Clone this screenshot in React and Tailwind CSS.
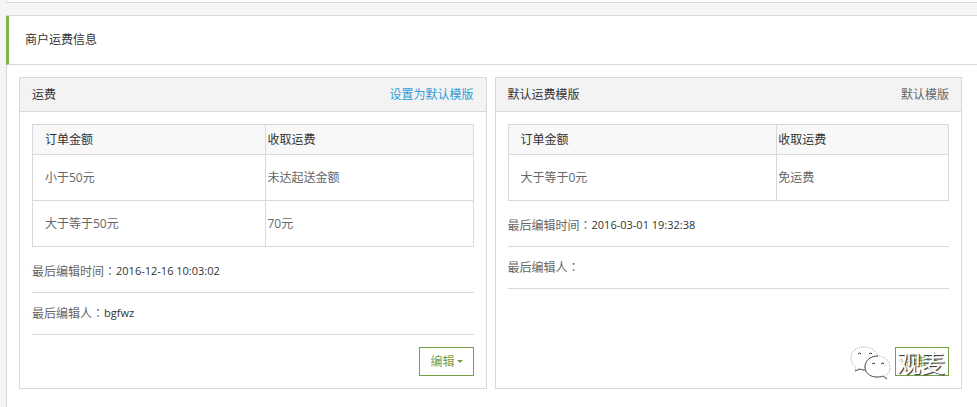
import React from 'react';

const Label = ({ children }) => (
    <dt>
        {children}
        <span className="font-['Noto_Sans_CJK_TC',sans-serif]">：</span>
    </dt>
);

const FreightCard = ({ title, action, columnClass, rows, editedAt, editedBy, children }) => {
    return (
        <section className="flex flex-col border border-[#d8d9db] bg-white">
            <header className="flex items-center justify-between h-[34px] px-3 bg-[#f3f3f3] border-b border-[#d8d9db]">
                <h2 className="text-[#333]">{title}</h2>
                {action}
            </header>

            <div className="flex flex-col flex-1 p-3">
                <table className="w-full border-collapse text-left">
                    <thead>
                        <tr className="h-[30px] bg-[#f8f8f9] text-[#333]">
                            <th className={`${columnClass} border border-[#d8d9db] pl-3 font-normal`}>订单金额</th>
                            <th className="border border-[#d8d9db] pl-px font-normal">收取运费</th>
                        </tr>
                    </thead>
                    <tbody>
                        {rows.map(([amount, fee]) => (
                            <tr key={amount} className="h-[46px]">
                                <td className="border border-[#d8d9db] pl-3">{amount}</td>
                                <td className="border border-[#d8d9db] pl-px">{fee}</td>
                            </tr>
                        ))}
                    </tbody>
                </table>

                <dl className="mt-1">
                    <div className="flex items-center h-[42px] border-b border-[#d8d9db]">
                        <Label>最后编辑时间</Label>
                        <dd className="text-[11px] text-[#333]">{editedAt}</dd>
                    </div>
                    <div className="flex items-center h-[42px] border-b border-[#d8d9db]">
                        <Label>最后编辑人</Label>
                        <dd className="text-[11px] text-[#333]">{editedBy}</dd>
                    </div>
                </dl>

                <div className="relative flex justify-end mt-auto pt-3">
                    <button type="button" className="flex items-center gap-0.5 h-[29px] px-2.5 border border-[#76a043] text-[#76a043]">
                        编辑
                        <svg width="6" height="3" viewBox="0 0 6 3" fill="currentColor" aria-hidden="true">
                            <path d="M0 0h6L3 3z" />
                        </svg>
                    </button>
                    {children}
                </div>
            </div>
        </section>
    );
};

const WechatMark = () => (
    <div className="absolute right-1 -bottom-1 flex items-center gap-1.5 pointer-events-none">
        <svg width="41" height="34" viewBox="0 0 41 34" fill="#fff" aria-hidden="true">
            <path d="M14 1C6 1 1 6 1 12c0 4 2 7 5 9l-1 4 5-2c2 1 9 1 11 0 4-2 7-6 7-11 0-6-6-11-14-11z" stroke="#999" strokeWidth="0.8" strokeDasharray="1 1" />
            <path d="M5 25l5-2c2 1 4 1 6 1" fill="none" stroke="#555" />
            <path d="M27 10c-7 0-12 5-12 11s5 10 12 10c2 0 4 0 6-1l4 3-1-4c3-2 4-4 4-8 0-6-6-11-13-11z" stroke="#999" strokeWidth="0.8" strokeDasharray="1 1" />
            <path d="M28 10c-7 0-13 4-13 11 0 6 5 10 12 10 2 0 4 0 6-1l4 3" fill="none" stroke="#555" />
            <path d="M8 8q2-2 3 0M19 8q2-2 3 0M22 18q2-2 3 0M31 18q2-2 3 0" fill="none" stroke="#333" />
        </svg>
        <span className="text-2xl leading-8 text-white [text-shadow:1px_1px_1px_#222]">观麦</span>
    </div>
);

const App = () => {
    return (
        <div className="min-h-screen flex flex-col pl-1.5 bg-[#f5f5f5] font-['Open_Sans','Noto_Sans_CJK_SC',sans-serif] text-xs text-[#666]">
            <div className="h-[3px] bg-white border-l border-b border-[#d8d9db]" />

            <main className="flex-1 mt-3 bg-white border-t border-[#d8d9db]">
                <div className="flex items-center h-[49px] pl-4 border-l-3 border-l-[#84b04e] border-b border-b-[#d8d9db]">
                    <h1 className="text-[#333]">商户运费信息</h1>
                </div>

                <div className="grid grid-cols-2 gap-2 min-h-[342px] pl-3 pr-[15px] pt-3 pb-[18px] border-l border-[#d8d9db]">
                    <FreightCard
                        title="运费"
                        action={<a href="#default" className="text-[#2f9bd6]">设置为默认模版</a>}
                        columnClass="w-[53%]"
                        rows={[['小于50元', '未达起送金额'], ['大于等于50元', '70元']]}
                        editedAt="2016-12-16 10:03:02"
                        editedBy="bgfwz"
                    />
                    <FreightCard
                        title="默认运费模版"
                        action={<span>默认模版</span>}
                        columnClass="w-[61%]"
                        rows={[['大于等于0元', '免运费']]}
                        editedAt="2016-03-01 19:32:38"
                        editedBy=""
                    >
                        <WechatMark />
                    </FreightCard>
                </div>
            </main>
        </div>
    );
};

export default App;
